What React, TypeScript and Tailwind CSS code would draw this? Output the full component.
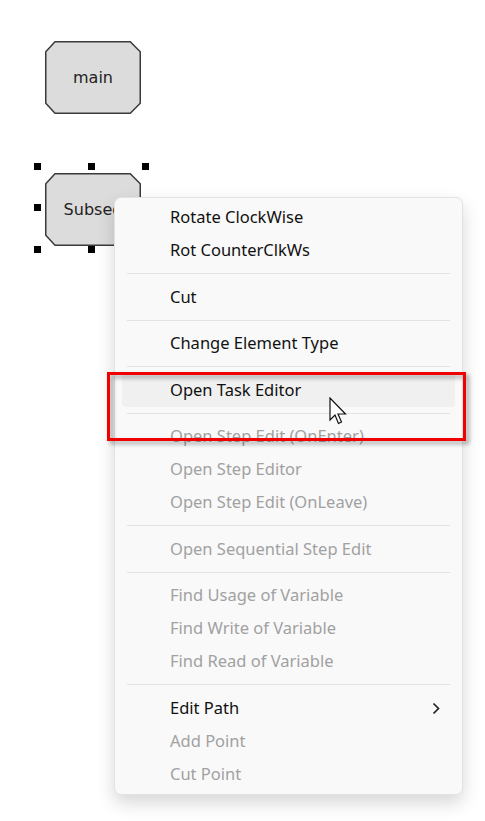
import React from "react";

type Entry = { label: string; off?: boolean; hot?: boolean; sub?: boolean } | "sep";

const entries: Entry[] = [
  { label: "Rotate ClockWise" },
  { label: "Rot CounterClkWs" },
  "sep",
  { label: "Cut" },
  "sep",
  { label: "Change Element Type" },
  "sep",
  { label: "Open Task Editor", hot: true },
  "sep",
  { label: "Open Step Edit (OnEnter)", off: true },
  { label: "Open Step Editor", off: true },
  { label: "Open Step Edit (OnLeave)", off: true },
  "sep",
  { label: "Open Sequential Step Edit", off: true },
  "sep",
  { label: "Find Usage of Variable", off: true },
  { label: "Find Write of Variable", off: true },
  { label: "Find Read of Variable", off: true },
  "sep",
  { label: "Edit Path", sub: true },
  { label: "Add Point", off: true },
  { label: "Cut Point", off: true },
];

function Node({ label, className }: { label: string; className: string }) {
  return (
    <div className={"absolute w-[96px] h-[73px] " + className}>
      <svg className="absolute inset-0" width="96" height="73" viewBox="0 0 96 73">
        <polygon
          points="10,0.75 85.25,0.75 95.25,10.75 95.25,62.25 85.25,72.25 10,72.25 0.75,62.25 0.75,10.75"
          fill="#dcdcdc"
          stroke="#3a3a3a"
          strokeWidth="1.5"
        />
      </svg>
      <div className="relative flex h-full items-center justify-center font-['DejaVu_Sans',sans-serif] text-[16px] text-[#222]">
        {label}
      </div>
    </div>
  );
}

function Handle({ className }: { className: string }) {
  return <div className={"absolute w-[7px] h-[7px] bg-black " + className} />;
}

function ContextMenu() {
  return (
    <div className="absolute left-[114px] top-[197px] w-[349px] flex flex-col py-[3px] bg-[#f9f9f9] border border-[#e2e2e2] rounded-[7px] shadow-[0_8px_18px_rgba(0,0,0,0.16)] font-['Noto_Sans',sans-serif] text-[16.5px]">
      {entries.map((e, i) =>
        e === "sep" ? (
          <div key={i} className="h-[13.5px] flex items-center px-[12px]">
            <div className="h-px w-full bg-[#e3e3e3]" />
          </div>
        ) : (
          <div
            key={i}
            className={
              "h-[33px] mx-[7px] flex items-center justify-between pl-[48px] pr-[15px] rounded-[4px] " +
              (e.hot ? "bg-[#f0f0f0] " : "") +
              (e.off ? "text-[#a1a1a1]" : "text-[#111]")
            }
          >
            <span>{e.label}</span>
            {e.sub && (
              <svg width="8" height="13" viewBox="0 0 8 13">
                <path d="M1.5 1.5 L6.5 6.5 L1.5 11.5" fill="none" stroke="#222" strokeWidth="1.7" />
              </svg>
            )}
          </div>
        )
      )}
    </div>
  );
}

export default function App() {
  return (
    <div className="relative w-[485px] h-[821px] bg-white overflow-hidden">
      <Node label="main" className="left-[45px] top-[41px]" />

      <Node label="Subseq" className="left-[45px] top-[173px]" />
      <Handle className="left-[34px] top-[163px]" />
      <Handle className="left-[88px] top-[163px]" />
      <Handle className="left-[142px] top-[163px]" />
      <Handle className="left-[34px] top-[204px]" />
      <Handle className="left-[34px] top-[246px]" />
      <Handle className="left-[88px] top-[246px]" />

      <ContextMenu />

      {/* annotation box */}
      <div className="absolute left-[107px] top-[372px] w-[359px] h-[69px] border-[3px] border-[#f00000] drop-shadow-[3px_3px_2px_rgba(0,0,0,0.35)]" />

      {/* mouse pointer */}
      <svg className="absolute left-[329px] top-[397px]" width="19" height="28" viewBox="0 0 19 28">
        <polygon
          points="1,1 1,23 6,18 9.5,26.5 12.5,25 9,17 16.5,17"
          fill="#fff"
          stroke="#111"
          strokeWidth="1.2"
          strokeLinejoin="miter"
        />
      </svg>
    </div>
  );
}
